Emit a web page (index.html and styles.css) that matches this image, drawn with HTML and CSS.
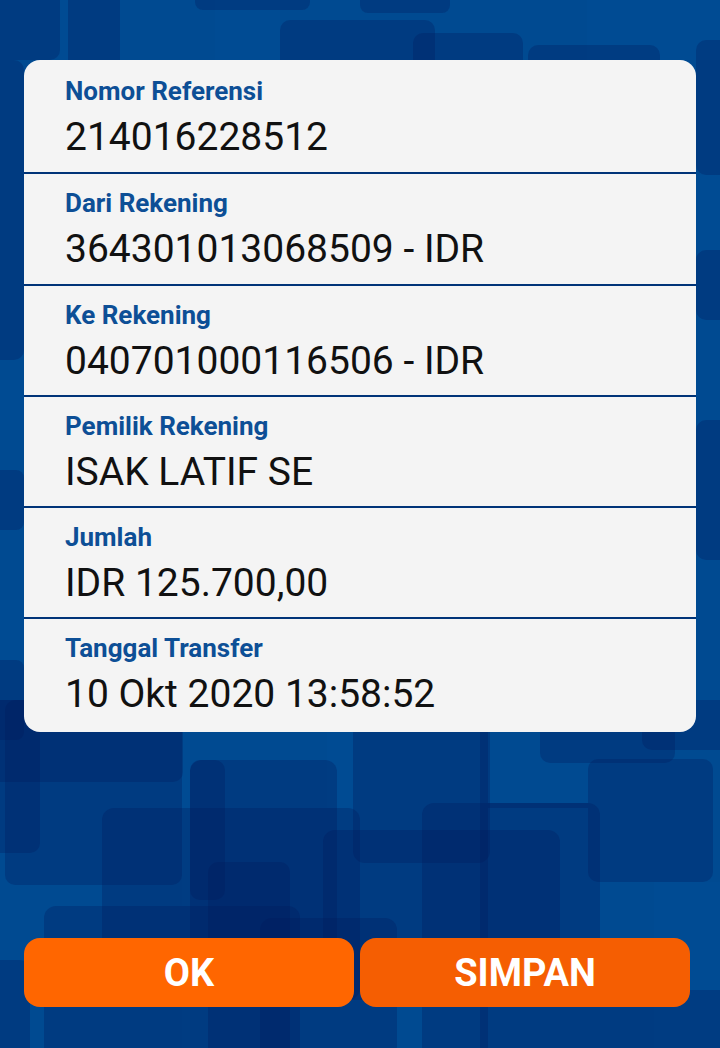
FILE: index.html
```html
<!DOCTYPE html>
<html lang="id">
<head>
    <meta charset="UTF-8">
    <meta name="viewport" content="width=device-width, initial-scale=1.0">
    <title>Bukti Transfer</title>
    <link rel="stylesheet" href="styles.css">
</head>
<body>

    <!-- pola latar belakang -->
    <svg class="backdrop" width="720" height="1048" viewBox="0 0 720 1048">
        <g class="light">
            <rect x="587" y="0" width="133" height="60"/>
            <rect x="60" y="0" width="8" height="60"/>
            <rect x="215" y="0" width="65" height="60"/>
            <rect x="696" y="175" width="24" height="75"/>
            <rect x="182" y="730" width="8" height="318"/>
            <rect x="327" y="730" width="26" height="100"/>
            <rect x="654" y="882" width="66" height="166"/>
            <rect x="0" y="380" width="24" height="50"/>
            <rect x="0" y="600" width="24" height="60"/>
        </g>
        <g class="dark">
            <rect x="-10" y="-10" width="70" height="70" rx="10"/>
            <rect x="68" y="-10" width="52" height="80" rx="10"/>
            <rect x="195" y="-20" width="115" height="30" rx="8"/>
            <rect x="280" y="20" width="155" height="60" rx="10"/>
            <rect x="360" y="-20" width="90" height="33" rx="8"/>
            <rect x="413" y="33" width="110" height="40" rx="10"/>
            <rect x="528" y="45" width="132" height="40" rx="10"/>
            <rect x="-10" y="60" width="34" height="300" rx="10"/>
            <rect x="-10" y="470" width="34" height="60" rx="8"/>
            <rect x="-10" y="660" width="34" height="80" rx="8"/>
            <rect x="696" y="40" width="40" height="135" rx="10"/>
            <rect x="696" y="250" width="40" height="70" rx="10"/>
            <rect x="696" y="420" width="40" height="140" rx="10"/>
            <rect x="-10" y="700" width="50" height="153" rx="10"/>
            <rect x="5" y="700" width="177" height="185" rx="10"/>
            <rect x="-10" y="700" width="193" height="82" rx="10"/>
            <rect x="102" y="808" width="258" height="192" rx="12"/>
            <rect x="190" y="760" width="35" height="140" rx="10"/>
            <rect x="44" y="906" width="256" height="160" rx="12"/>
            <rect x="208" y="862" width="82" height="200" rx="10"/>
            <rect x="190" y="760" width="147" height="240" rx="12"/>
            <rect x="353" y="700" width="137" height="163" rx="12"/>
            <rect x="323" y="830" width="237" height="170" rx="12"/>
            <rect x="422" y="803" width="178" height="260" rx="12"/>
            <rect x="260" y="918" width="137" height="140" rx="12"/>
            <rect x="540" y="700" width="135" height="63" rx="10"/>
            <rect x="588" y="759" width="125" height="123" rx="10"/>
            <rect x="642" y="700" width="98" height="50" rx="10"/>
            <rect x="480" y="730" width="8" height="318"/>
            <rect x="488" y="803" width="100" height="5"/>
            <rect x="-10" y="960" width="40" height="100" rx="10"/>
            <rect x="600" y="990" width="130" height="70" rx="10"/>
        </g>
    </svg>

    <div class="page">
        <div class="card">
            <div class="row">
                <div class="label">Nomor Referensi</div>
                <div class="value">214016228512</div>
            </div>
            <div class="row">
                <div class="label">Dari Rekening</div>
                <div class="value">364301013068509 - IDR</div>
            </div>
            <div class="row">
                <div class="label">Ke Rekening</div>
                <div class="value">040701000116506 - IDR</div>
            </div>
            <div class="row">
                <div class="label">Pemilik Rekening</div>
                <div class="value">ISAK LATIF SE</div>
            </div>
            <div class="row">
                <div class="label">Jumlah</div>
                <div class="value">IDR 125.700,00</div>
            </div>
            <div class="row">
                <div class="label">Tanggal Transfer</div>
                <div class="value">10 Okt 2020 13:58:52</div>
            </div>
        </div>

        <div class="actions">
            <button type="button" class="btn btn-ok">OK</button>
            <button type="button" class="btn btn-save">SIMPAN</button>
        </div>
    </div>

</body>
</html>
```

FILE: styles.css
```css
body {
    font-family: Roboto, "Liberation Sans", Arial, sans-serif;
    background-color: #004a91;
    margin: 0;
    padding: 0;
    overflow: hidden;
}

.backdrop {
    position: absolute;
    top: 0;
    left: 0;
}

.backdrop .light rect {
    fill: #004b93;
}

.backdrop .dark rect {
    fill: #001c5c;
    fill-opacity: 0.3;
}

.page {
    position: relative;
    height: 1048px;
    box-sizing: border-box;
    padding: 60px 24px 41px;
    display: flex;
    flex-direction: column;
}

.card {
    height: 672px;
    background-color: #f4f4f4;
    border-radius: 16px;
    overflow: hidden;
    display: flex;
    flex-direction: column;
}

.row {
    height: 111px;
    box-sizing: border-box;
    padding: 16px 40px 0 41px;
}

.row:first-child,
.row:nth-child(2) {
    height: 112px;
}

.row:last-child {
    flex: 1;
}

.row + .row {
    border-top: 2px solid #003478;
    padding-top: 14px;
}

.label {
    color: #0d4f96;
    font-size: 26px;
    font-weight: 700;
    line-height: 30px;
}

.value {
    color: #111;
    font-size: 39px;
    line-height: 46px;
    margin-top: 8px;
}

.actions {
    margin-top: auto;
    display: flex;
    gap: 6px;
    padding-right: 6px;
}

.btn {
    flex: 1;
    height: 69px;
    border: none;
    border-radius: 16px;
    color: white;
    font-family: Roboto, "Liberation Sans", Arial, sans-serif;
    font-size: 38px;
    font-weight: 700;
    cursor: pointer;
}

.btn-ok {
    background-color: #ff6600;
}

.btn-save {
    background-color: #f55e02;
}
```
